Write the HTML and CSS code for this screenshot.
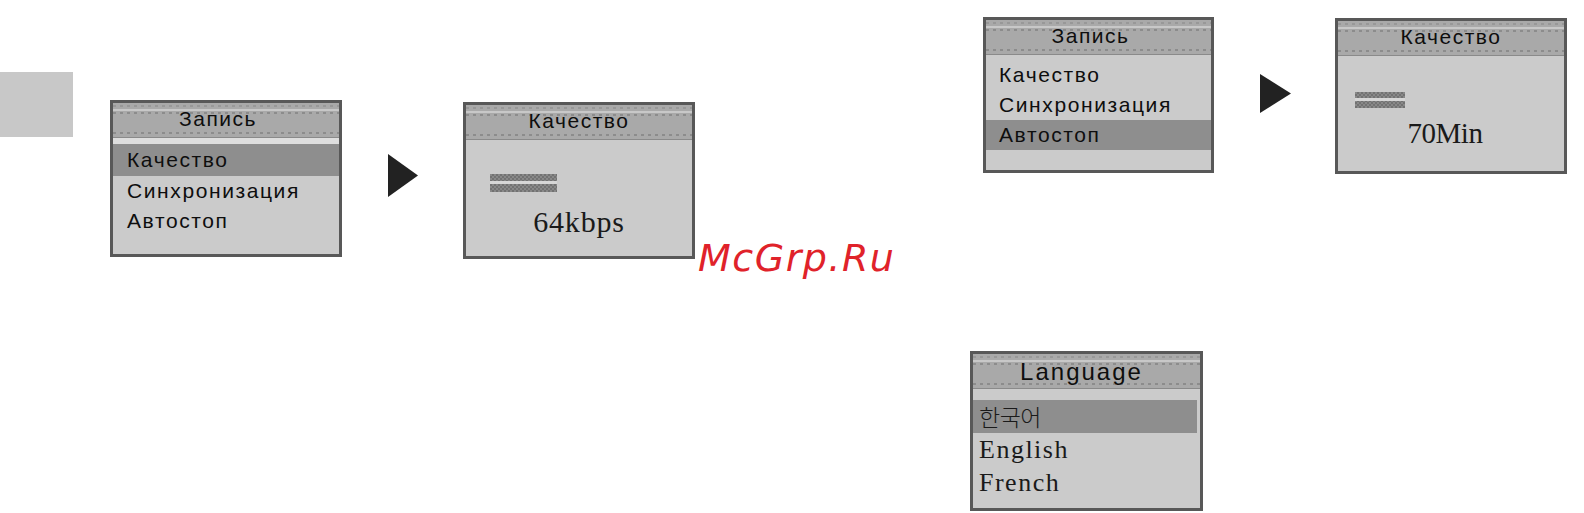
FILE: index.html
```html
<!DOCTYPE html>
<html lang="ru">
<head>
<meta charset="utf-8">
<title>Запись — меню</title>
<link rel="stylesheet" href="styles.css">
</head>
<body>
<div class="page">
  <div class="tab"></div>

  <div class="fig fig-left">
    <div class="panel p1">
      <div class="hdr hdr-off">Запись</div>
      <div class="strip"></div>
      <div class="item sel">Качество</div>
      <div class="item">Синхронизация</div>
      <div class="item">Автостоп</div>
    </div>
    <svg class="arrow a1" width="30" height="43" viewBox="0 0 30 43"><polygon points="0,0 30,21.5 0,43" fill="#222"/></svg>
    <div class="panel p2">
      <div class="hdr">Качество</div>
      <div class="bar b1"></div>
      <div class="value v1">64kbps</div>
    </div>
  </div>

  <div class="right">
    <div class="fig fig-top">
      <div class="panel p3">
        <div class="hdr hdr-off">Запись</div>
        <div class="gap"></div>
        <div class="item">Качество</div>
        <div class="item">Синхронизация</div>
        <div class="item sel">Автостоп</div>
      </div>
      <svg class="arrow a2" width="31" height="39" viewBox="0 0 31 39"><polygon points="0,0 31,19.5 0,39" fill="#222"/></svg>
      <div class="panel p4">
        <div class="hdr">Качество</div>
        <div class="bar b2"></div>
        <div class="value v2">70Min</div>
      </div>
    </div>

    <div class="panel p5">
      <div class="hdr hdr-lang">Language</div>
      <div class="strip-lang"></div>
      <div class="litem sel ko">한국어</div>
      <div class="litem">English</div>
      <div class="litem">French</div>
    </div>
  </div>

  <div class="watermark">McGrp.Ru</div>
</div>
</body>
</html>
```

FILE: styles.css
```css
html, body {
  margin: 0;
  padding: 0;
  background: #ffffff;
}

.page {
  position: relative;
  width: 1584px;
  height: 513px;
  overflow: hidden;
  display: flex;
  align-items: flex-start;
  font-family: "Liberation Sans", Arial, sans-serif;
  color: #111;
}

.tab {
  width: 73px;
  height: 65px;
  margin-top: 72px;
  background: #c8c8c8;
  flex: none;
}

.fig {
  display: flex;
  align-items: flex-start;
  flex: none;
}

.fig-left {
  margin-left: 37px;
}

.right {
  margin-left: 275px;
  display: flex;
  flex-direction: column;
  align-items: flex-start;
  flex: none;
}

.fig-top {
  padding-left: 13px;
}

/* panel */
.panel {
  box-sizing: border-box;
  width: 232px;
  height: 157px;
  border: 3px solid #585858;
  background: #cbcbcb;
  display: flex;
  flex-direction: column;
  flex: none;
}

.p1 { margin-top: 100px; }
.p2 { margin-top: 102px; margin-left: 45px; }
.p3 { margin-top: 17px; width: 231px; height: 156px; }
.p4 { margin-top: 18px; margin-left: 44px; height: 156px; }
.p5 { margin-top: 177px; height: 160px; width: 233px; }

.arrow { flex: none; display: block; }
.a1 { margin-top: 154px; margin-left: 46px; }
.a2 { margin-top: 74px; margin-left: 46px; }

.hdr {
  box-sizing: border-box;
  flex: none;
  height: 35px;
  line-height: 32px;
  text-align: center;
  font-size: 21px;
  letter-spacing: 1.5px;
  color: #0e0e0e;
  border-bottom: 1px solid #8a8a8a;
  background:
    repeating-linear-gradient(90deg, #989898 0 3px, transparent 3px 7px) 0 2px / 100% 2px no-repeat,
    linear-gradient(#c8c8c8, #c8c8c8) 0 6px / 100% 2px no-repeat,
    repeating-linear-gradient(90deg, #8c8c8c 0 3px, transparent 3px 7px) 0 9px / 100% 2px no-repeat,
    repeating-linear-gradient(90deg, #8c8c8c 0 3px, transparent 3px 7px) 0 29px / 100% 2px no-repeat,
    #a9a9a9;
}

.hdr-off {
  padding-right: 16px;
}

.strip {
  flex: none;
  height: 6px;
  background: #dedede;
}

.gap {
  flex: none;
  height: 5px;
}

.item {
  flex: none;
  height: 30px;
  line-height: 30px;
  padding-left: 14px;
  font-size: 21px;
  letter-spacing: 1.6px;
  color: #0e0e0e;
  white-space: nowrap;
}

.p3 .item { padding-left: 13px; }

.item.sel {
  background: #8e8e8e;
}

.p1 .item.sel { height: 32px; line-height: 32px; }

/* quality bar */
.bar {
  flex: none;
  background:
    linear-gradient(to bottom, transparent 0 39%, #d6d6d6 39% 55%, transparent 55%),
    repeating-conic-gradient(#727272 0 25%, #888888 0 50%) 0 0 / 4px 4px;
}

.b1 {
  width: 67px;
  height: 18px;
  margin: 34px 0 0 24px;
}

.b2 {
  width: 50px;
  height: 16px;
  margin: 36px 0 0 17px;
}

.value {
  flex: none;
  font-family: "Liberation Serif", "Times New Roman", serif;
  text-align: center;
  color: #1a1a1a;
  white-space: nowrap;
}

.v1 {
  font-size: 30px;
  letter-spacing: 0.8px;
  line-height: 34px;
  margin-top: 13px;
}

.v2 {
  font-size: 29px;
  letter-spacing: -0.5px;
  line-height: 32px;
  margin-top: 9px;
  padding-right: 12px;
}

/* language panel */
.hdr-lang {
  font-size: 24px;
  letter-spacing: 2px;
  line-height: 35px;
  padding-right: 10px;
}

.strip-lang {
  flex: none;
  height: 11px;
}

.litem {
  flex: none;
  height: 33px;
  line-height: 33px;
  padding-left: 6px;
  font-family: "Liberation Serif", "Times New Roman", serif;
  font-size: 26px;
  letter-spacing: 1.5px;
  color: #1a1a1a;
  white-space: nowrap;
}

.litem.sel {
  background: #8e8e8e;
  margin-right: 3px;
}

.ko {
  font-family: "Noto Sans CJK KR", sans-serif;
  font-size: 23px;
  font-weight: 300;
  letter-spacing: -0.5px;
}

.watermark {
  position: absolute;
  left: 698px;
  top: 236px;
  font-family: "DejaVu Sans", sans-serif;
  font-style: italic;
  font-size: 38px;
  letter-spacing: 1.5px;
  line-height: 44px;
  color: #e0222a;
  white-space: nowrap;
}
```
